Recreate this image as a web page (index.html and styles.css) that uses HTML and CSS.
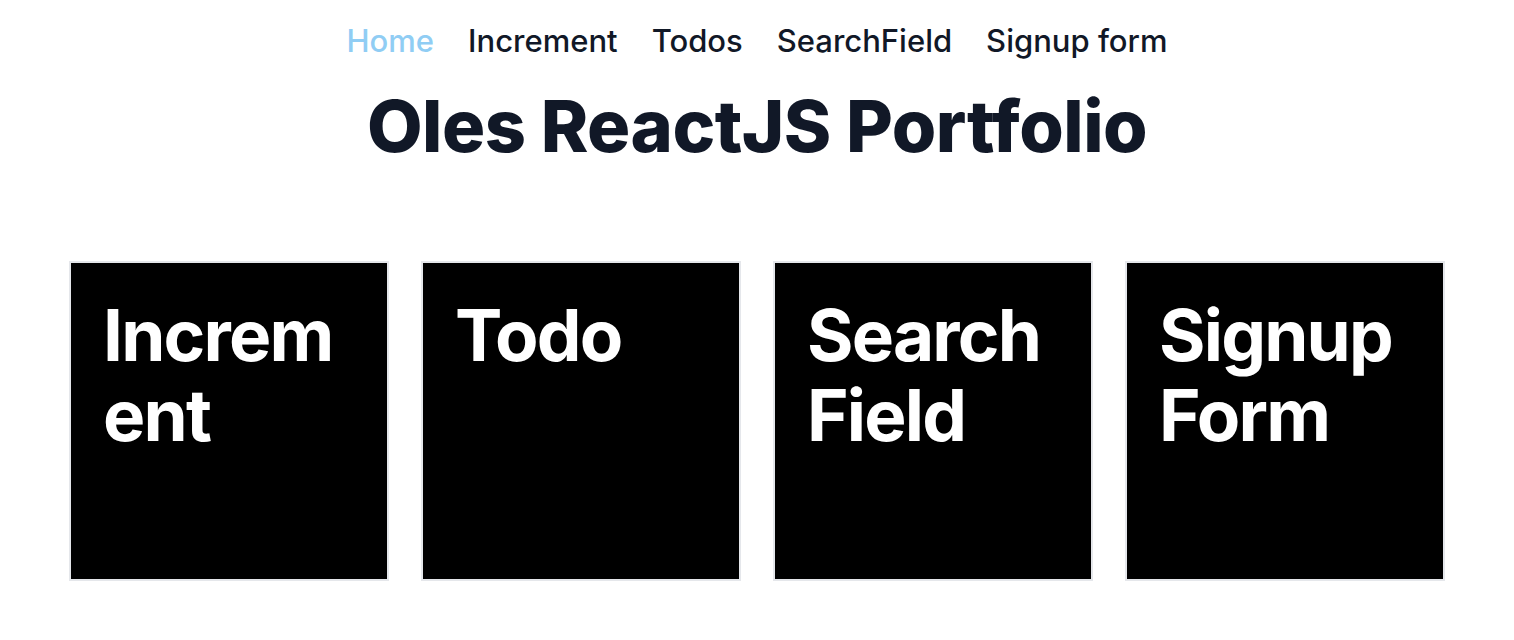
FILE: index.html
```html
<!DOCTYPE html>
<html lang="en">
<head>
<meta charset="utf-8">
<title>Oles ReactJS Portfolio</title>
<link rel="stylesheet" href="styles.css">
</head>
<body>
  <nav class="nav">
    <a class="nav-link active" href="#">Home</a>
    <a class="nav-link" href="#">Increment</a>
    <a class="nav-link" href="#">Todos</a>
    <a class="nav-link" href="#">SearchField</a>
    <a class="nav-link" href="#">Signup form</a>
  </nav>
  <h1 class="title">Oles ReactJS Portfolio</h1>
  <main class="cards">
    <a class="card" href="#"><h2 class="card-title">Increment</h2></a>
    <a class="card" href="#"><h2 class="card-title">Todo</h2></a>
    <a class="card" href="#"><h2 class="card-title">Search Field</h2></a>
    <a class="card" href="#"><h2 class="card-title">Signup Form</h2></a>
  </main>
</body>
</html>
```
FILE: styles.css
```css
* { box-sizing: border-box; }
html, body { margin: 0; padding: 0; background: #fff; }
body {
  font-family: Inter, "Noto Sans", "Liberation Sans", sans-serif;
  color: #111827;
}
.nav {
  display: flex;
  justify-content: center;
  gap: 34px;
  padding-top: 23px;
}
.nav-link {
  font-size: 31px;
  line-height: 36px;
  font-weight: 500;
  color: #111827;
  text-decoration: none;
}
.nav-link.active { color: #90cdf4; }
.title {
  margin: 31px 0 0;
  text-align: center;
  font-size: 72px;
  line-height: 72px;
  font-weight: 800;
  letter-spacing: -0.5px;
}
.cards {
  display: grid;
  grid-template-columns: repeat(4, 320px);
  gap: 32px;
  justify-content: center;
  margin-top: 99px;
}
.card {
  display: block;
  width: 320px;
  height: 320px;
  background: #000;
  border: 2px solid #e5e7eb;
  padding: 32px;
  text-decoration: none;
}
.card-title {
  margin: 0;
  color: #fff;
  font-size: 71px;
  line-height: 80px;
  font-weight: 700;
  letter-spacing: -1.8px;
  overflow-wrap: break-word;
  word-break: break-word;
}
```
